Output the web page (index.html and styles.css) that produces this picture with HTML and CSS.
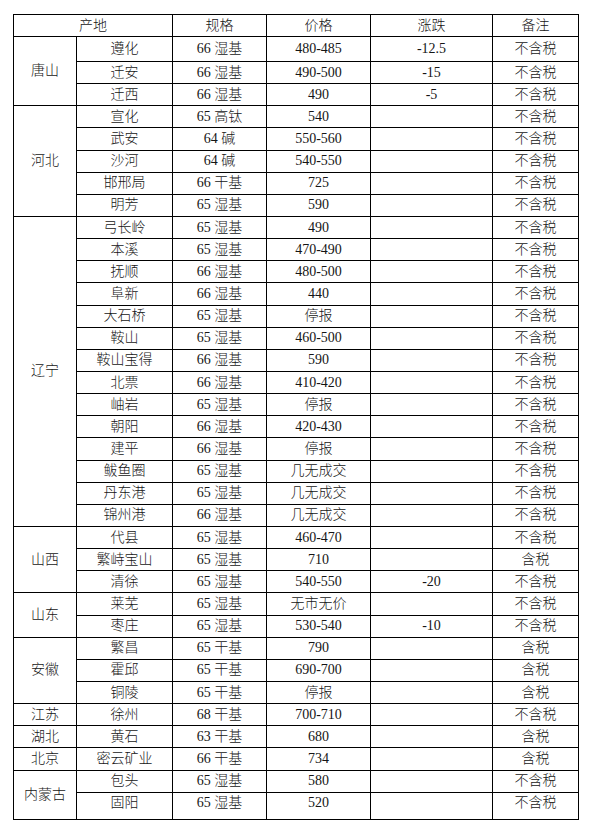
FILE: index.html
```html
<!DOCTYPE html>
<html lang="zh">
<head>
<meta charset="utf-8">
<title>铁精粉价格</title>
<link rel="stylesheet" href="styles.css">
</head>
<body>
<table class="price-table">
  <colgroup>
    <col class="c-region">
    <col class="c-place">
    <col class="c-spec">
    <col class="c-price">
    <col class="c-change">
    <col class="c-note">
  </colgroup>
  <thead>
    <tr class="row-head">
      <th colspan="2">产地</th>
      <th>规格</th>
      <th>价格</th>
      <th>涨跌</th>
      <th>备注</th>
    </tr>
  </thead>
  <tbody>
    <tr class="row-first"><td rowspan="3">唐山</td><td>遵化</td><td>66 湿基</td><td>480-485</td><td>-12.5</td><td>不含税</td></tr>
    <tr><td>迁安</td><td>66 湿基</td><td>490-500</td><td>-15</td><td>不含税</td></tr>
    <tr><td>迁西</td><td>66 湿基</td><td>490</td><td>-5</td><td>不含税</td></tr>

    <tr><td rowspan="5">河北</td><td>宣化</td><td>65 高钛</td><td>540</td><td></td><td>不含税</td></tr>
    <tr><td>武安</td><td>64 碱</td><td>550-560</td><td></td><td>不含税</td></tr>
    <tr><td>沙河</td><td>64 碱</td><td>540-550</td><td></td><td>不含税</td></tr>
    <tr><td>邯邢局</td><td>66 干基</td><td>725</td><td></td><td>不含税</td></tr>
    <tr><td>明芳</td><td>65 湿基</td><td>590</td><td></td><td>不含税</td></tr>

    <tr><td rowspan="14">辽宁</td><td>弓长岭</td><td>65 湿基</td><td>490</td><td></td><td>不含税</td></tr>
    <tr><td>本溪</td><td>65 湿基</td><td>470-490</td><td></td><td>不含税</td></tr>
    <tr><td>抚顺</td><td>66 湿基</td><td>480-500</td><td></td><td>不含税</td></tr>
    <tr><td>阜新</td><td>66 湿基</td><td>440</td><td></td><td>不含税</td></tr>
    <tr><td>大石桥</td><td>65 湿基</td><td>停报</td><td></td><td>不含税</td></tr>
    <tr><td>鞍山</td><td>65 湿基</td><td>460-500</td><td></td><td>不含税</td></tr>
    <tr><td>鞍山宝得</td><td>66 湿基</td><td>590</td><td></td><td>不含税</td></tr>
    <tr><td>北票</td><td>66 湿基</td><td>410-420</td><td></td><td>不含税</td></tr>
    <tr><td>岫岩</td><td>65 湿基</td><td>停报</td><td></td><td>不含税</td></tr>
    <tr><td>朝阳</td><td>66 湿基</td><td>420-430</td><td></td><td>不含税</td></tr>
    <tr><td>建平</td><td>66 湿基</td><td>停报</td><td></td><td>不含税</td></tr>
    <tr><td>鲅鱼圈</td><td>65 湿基</td><td>几无成交</td><td></td><td>不含税</td></tr>
    <tr><td>丹东港</td><td>65 湿基</td><td>几无成交</td><td></td><td>不含税</td></tr>
    <tr><td>锦州港</td><td>66 湿基</td><td>几无成交</td><td></td><td>不含税</td></tr>

    <tr><td rowspan="3">山西</td><td>代县</td><td>65 湿基</td><td>460-470</td><td></td><td>不含税</td></tr>
    <tr><td>繁峙宝山</td><td>65 湿基</td><td>710</td><td></td><td>含税</td></tr>
    <tr><td>清徐</td><td>65 湿基</td><td>540-550</td><td>-20</td><td>不含税</td></tr>

    <tr><td rowspan="2">山东</td><td>莱芜</td><td>65 湿基</td><td>无市无价</td><td></td><td>不含税</td></tr>
    <tr><td>枣庄</td><td>65 湿基</td><td>530-540</td><td>-10</td><td>不含税</td></tr>

    <tr><td rowspan="3">安徽</td><td>繁昌</td><td>65 干基</td><td>790</td><td></td><td>含税</td></tr>
    <tr><td>霍邱</td><td>65 干基</td><td>690-700</td><td></td><td>含税</td></tr>
    <tr><td>铜陵</td><td>65 干基</td><td>停报</td><td></td><td>含税</td></tr>

    <tr><td>江苏</td><td>徐州</td><td>68 干基</td><td>700-710</td><td></td><td>不含税</td></tr>
    <tr><td>湖北</td><td>黄石</td><td>63 干基</td><td>680</td><td></td><td>含税</td></tr>
    <tr><td>北京</td><td>密云矿业</td><td>66 干基</td><td>734</td><td></td><td>含税</td></tr>

    <tr><td rowspan="2">内蒙古</td><td>包头</td><td>65 湿基</td><td>580</td><td></td><td>不含税</td></tr>
    <tr class="row-last"><td>固阳</td><td>65 湿基</td><td>520</td><td></td><td>不含税</td></tr>
  </tbody>
</table>
</body>
</html>
```

FILE: styles.css
```css
html, body {
  margin: 0;
  padding: 0;
  background: #ffffff;
}

body {
  padding: 14px 0 0 13px;
  font-family: "Liberation Serif", "Noto Sans CJK SC", serif;
  font-size: 14px;
  font-weight: 300;
  color: #151515;
}

.price-table {
  border-collapse: collapse;
  table-layout: fixed;
  width: 565px;
}

.c-region { width: 63px; }
.c-place  { width: 96px; }
.c-spec   { width: 94px; }
.c-price  { width: 104px; }
.c-change { width: 122px; }
.c-note   { width: 86px; }

.price-table th,
.price-table td {
  border: 1px solid #000000;
  padding: 0;
  text-align: center;
  vertical-align: middle;
  font-weight: 300;
  line-height: 18px;
  white-space: nowrap;
}

.price-table tr {
  height: 22.15px;
}

.price-table .row-head {
  height: 22px;
}

.price-table .row-first {
  height: 25px;
}

.price-table .row-last {
  height: 27px;
}

.price-table .row-last td {
  vertical-align: top;
  padding-top: 1px;
}
```
